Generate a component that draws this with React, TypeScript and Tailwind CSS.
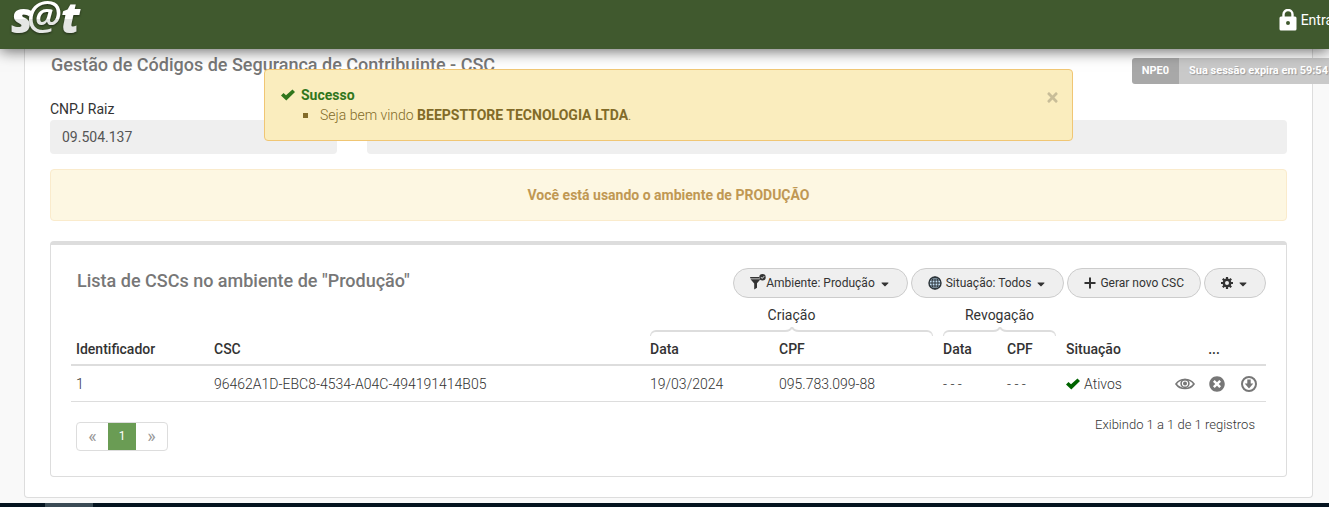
import type { ReactNode } from "react";
import { FaTimes, FaTimesCircle, FaCaretDown } from "react-icons/fa";

function Logo() {
  return (
    <svg width="76" height="42" viewBox="0 0 76 42" role="img" aria-label="s@t" className="overflow-visible drop-shadow-[0_1px_1px_rgba(0,0,0,0.5)]">
      <defs>
        <linearGradient id="logoFill" gradientUnits="userSpaceOnUse" x1="0" y1="0" x2="0" y2="38">
          <stop offset="0.500" stopColor="#ffffff" />
          <stop offset="0.500" stopColor="#e4e6e4" />
        </linearGradient>
      </defs>
      <g fill="url(#logoFill)" fontFamily="Open Sans, sans-serif" fontStyle="italic" fontWeight="800">
        <text x="1" y="33" fontSize="43">s</text>
        <text x="17" y="30" fontSize="40" fontWeight="600">@</text>
        <text x="51" y="33" fontSize="42">t</text>
      </g>
    </svg>
  );
}

function LockIcon() {
  return (
    <svg width="18" height="22" viewBox="0 0 18 22" aria-hidden="true">
      <path d="M4.500 9V5.500a4.500 4.500 0 0 1 9 0V9" fill="none" stroke="#fff" strokeWidth="2.400" />
      <path fillRule="evenodd" fill="#fff" d="M2 7.500h14a1.500 1.500 0 0 1 1.500 1.500v11a1.500 1.500 0 0 1-1.500 1.500H2A1.500 1.500 0 0 1 .5 20V9A1.500 1.500 0 0 1 2 7.500zM9 12a2 2 0 1 0 0 4 2 2 0 0 0 0-4z" />
    </svg>
  );
}

function CheckIcon({ color }: { color: string }) {
  return (
    <svg width="14" height="12" viewBox="0 0 14 12" aria-hidden="true">
      <path d="M0 6.500L2.500 4L5 6.300L11.500 0.500L14 3L5.300 11.500z" fill={color} />
    </svg>
  );
}

function FilterIcon() {
  return (
    <svg width="16" height="18" viewBox="0 0 16 18" aria-hidden="true">
      <path d="M0 3h9v1.500H0.500zM0.500 5.200h10L7 9.300v4.500L4.200 15.500v-6z" fill="#333" />
      <circle cx="12.500" cy="3.200" r="3.200" fill="#333" />
      <path d="M11 3.200l1.200 1.200L14.200 2.200" fill="none" stroke="#efefef" strokeWidth="1" />
    </svg>
  );
}

function GlobeIcon() {
  return (
    <svg width="14" height="14" viewBox="0 0 14 14" fill="none" stroke="#2b3338" strokeWidth="1" aria-hidden="true">
      <circle cx="7" cy="7" r="6" fill="#c3e0f5" strokeWidth="1.400" />
      <ellipse cx="7" cy="7" rx="3" ry="6" />
      <path d="M7 1v12M1 7h12M2 4h10M2 10h10" />
    </svg>
  );
}

function PlusIcon() {
  return (
    <svg width="12" height="12" viewBox="0 0 12 12" className="mr-1" aria-hidden="true">
      <path d="M6 0.500v11M0.500 6h11" stroke="#333" strokeWidth="2" />
    </svg>
  );
}

function GearIcon() {
  return (
    <svg width="12" height="12" viewBox="0 0 12 12" fill="none" stroke="#333" aria-hidden="true">
      <path d="M6 0v12M0 6h12M1.800 1.800l8.400 8.400M10.200 1.800l-8.400 8.400" strokeWidth="2.200" />
      <circle cx="6" cy="6" r="3.200" fill="#efefef" strokeWidth="2.400" />
    </svg>
  );
}

function EyeIcon() {
  return (
    <svg width="20" height="12" viewBox="0 0 20 12" fill="none" stroke="#777" aria-hidden="true">
      <path d="M1 6C5 0 15 0 19 6C15 12 5 12 1 6z" strokeWidth="1.600" />
      <circle cx="10" cy="5.500" r="3.900" strokeWidth="1.600" />
      <circle cx="10" cy="5.500" r="2" fill="#777" stroke="none" />
    </svg>
  );
}

function DownloadIcon() {
  return (
    <svg width="16" height="16" viewBox="0 0 16 16" aria-hidden="true">
      <circle cx="8" cy="8" r="7" fill="none" stroke="#777" strokeWidth="2" />
      <path d="M6.300 3.500h3.400V7.500H12.300l-4.300 5L3.700 7.500h2.600z" fill="#777" />
    </svg>
  );
}

function Brace() {
  return (
    <div className="mt-px flex h-2.5" aria-hidden="true">
      <div className="mt-[3px] h-[6px] flex-1 rounded-tl-lg border-t-2 border-l border-[#ddd]" />
      <svg width="14" height="6" viewBox="0 0 14 6" fill="none" stroke="#ddd" strokeWidth="2">
        <path d="M0 4C4 4 6 3 7 0C8 3 10 4 14 4" />
      </svg>
      <div className="mt-[3px] h-[6px] flex-1 rounded-tr-lg border-t-2 border-r border-[#ddd]" />
    </div>
  );
}

function PillButton({ children, label }: { children: ReactNode; label?: string }) {
  return (
    <button type="button" aria-label={label} className="flex h-[30px] items-center rounded-full border border-[#ccc] bg-[#efefef] px-4 text-xs whitespace-nowrap text-[#333]">
      {children}
    </button>
  );
}

const caret = <FaCaretDown size={12} className="mt-0.5 ml-1" aria-hidden="true" />;

export default function App() {
  return (
    <div className="flex min-h-screen flex-col overflow-x-hidden bg-[#f9f9f9] font-[Roboto,'Liberation_Sans',sans-serif] text-sm text-[#333]">
      <header className="relative z-10 flex h-[49px] items-start justify-between overflow-x-clip bg-[#40592e] pl-2.5 shadow-[0_2px_14px_rgba(0,0,0,0.6)]">
        <Logo />
        <a href="#entrar" className="-mr-1 flex items-center gap-1 pt-[9px] text-white">
          <LockIcon />
          Entra
        </a>
      </header>

      <div className="absolute top-[58px] right-0 z-[5] flex h-[26px] items-center overflow-hidden rounded-l-[3px] text-[11px] font-bold text-white">
        <span className="flex h-full items-center bg-[#a8a8a8] px-2.5">NPE0</span>
        <span className="flex h-full items-center bg-[#c9c9c9] pr-px pl-2.5 [text-shadow:1px_1px_1px_#999]">Sua sessão expira em 59:54</span>
      </div>

      <div role="alert" className="absolute top-[69px] right-64 left-[264px] z-20 flex h-[72px] justify-between rounded border border-[#f0c674] bg-[#faedbe] px-4 pt-[15px] text-[#826b28]">
        <div>
          <h2 className="flex items-center gap-1.5 font-bold text-[#30761c]">
            <CheckIcon color="#30761c" />
            Sucesso
          </h2>
          <ul className="pl-[22px] font-light">
            <li className="flex items-center gap-3 before:size-[5px] before:bg-[#826b28]">
              <span>Seja bem vindo <strong className="font-bold">BEEPSTTORE TECNOLOGIA LTDA</strong>.</span>
            </li>
          </ul>
        </div>
        <button type="button" aria-label="Fechar" className="-mr-1 flex h-6 items-center text-[#c8bd98]">
          <FaTimes size={15} />
        </button>
      </div>

      <main className="mx-4 mb-[5px] ml-6 flex-1 rounded-b-sm border border-t-0 border-[#ddd] bg-white px-[25px] pt-1 pb-5">
        <h1 className="pl-px text-lg leading-6 font-medium text-[#777]">Gestão de Códigos de Segurança de Contribuinte - CSC</h1>
        <form className="mt-[22px] grid grid-cols-[287px_1fr] items-end gap-x-[30px]">
          <div>
            <label htmlFor="cnpj" className="block leading-[21px]">CNPJ Raiz</label>
            <input id="cnpj" readOnly value="09.504.137" className="block h-[34px] w-full rounded bg-[#efefef] px-3 text-[#555]" />
          </div>
          <input aria-label="Nome" readOnly value="" className="block h-[34px] w-full rounded bg-[#efefef] px-3" />
        </form>
        <p className="mt-[15px] rounded border border-[#faebcc] bg-[#fdf7e2] py-[15px] text-center leading-5 font-bold text-[#c09853]">
          Você está usando o ambiente de PRODUÇÃO
        </p>

        <section className="mt-5 rounded-sm border border-t-4 border-[#ddd] px-5 pt-[23px] pb-[25px]">
          <div className="flex items-start justify-between">
            <h2 className="pl-1.5 text-lg leading-[26px] font-medium text-[#777]">Lista de CSCs no ambiente de "Produção"</h2>
            <div className="flex gap-[3px]">
              <PillButton><FilterIcon />Ambiente: Produção{caret}</PillButton>
              <PillButton><GlobeIcon /><span className="ml-1">Situação: Todos</span>{caret}</PillButton>
              <PillButton><PlusIcon />Gerar novo CSC</PillButton>
              <PillButton label="Opções"><GearIcon />{caret}</PillButton>
            </div>
          </div>

          <table className="mt-1.5 w-full table-fixed text-left">
            <colgroup>
              <col className="w-[138px]" />
              <col />
              <col className="w-[129px]" />
              <col className="w-[164px]" />
              <col className="w-16" />
              <col className="w-[59px]" />
              <col className="w-[101px]" />
              <col className="w-[104px]" />
            </colgroup>
            <thead>
              <tr>
                <td colSpan={2} />
                <th colSpan={2} scope="colgroup" className="px-[5px] text-center leading-[22px] font-normal">Criação<Brace /></th>
                <th colSpan={2} scope="colgroup" className="px-[5px] text-center leading-[22px] font-normal">Revogação<Brace /></th>
                <td colSpan={2} />
              </tr>
              <tr className="h-7 border-b-2 border-[#ddd] [&>th]:px-[5px] [&>th]:pb-1 [&>th]:font-medium">
                <th>Identificador</th>
                <th>CSC</th>
                <th>Data</th>
                <th>CPF</th>
                <th>Data</th>
                <th>CPF</th>
                <th>Situação</th>
                <th className="text-center">...</th>
              </tr>
            </thead>
            <tbody>
              <tr className="h-9 border-b border-[#ddd] font-light whitespace-nowrap [&>td]:px-[5px] [&>td]:pt-0.5">
                <td>1</td>
                <td>96462A1D-EBC8-4534-A04C-494191414B05</td>
                <td>19/03/2024</td>
                <td>095.783.099-88</td>
                <td>- - -</td>
                <td>- - -</td>
                <td>
                  <span className="flex items-center gap-1"><CheckIcon color="#006400" />Ativos</span>
                </td>
                <td>
                  <div className="flex items-center justify-end gap-4 pr-1 text-[#777]">
                    <button type="button" aria-label="Visualizar" className="-mr-0.5"><EyeIcon /></button>
                    <button type="button" aria-label="Revogar"><FaTimesCircle size={16} /></button>
                    <button type="button" aria-label="Baixar"><DownloadIcon /></button>
                  </div>
                </td>
              </tr>
            </tbody>
          </table>

          <div className="flex items-start justify-between pt-5 pr-[11px] pl-[5px]">
            <nav aria-label="Paginação" className="flex h-[29px] overflow-hidden rounded border border-[#ddd] text-[#999]">
              <button type="button" className="w-[31px] text-lg leading-6">«</button>
              <button type="button" aria-current="page" className="w-7 bg-[#6a9c54] text-xs text-white">1</button>
              <button type="button" className="w-[31px] text-lg leading-6">»</button>
            </nav>
            <p className="-mt-[7px] text-[13px] leading-5 font-light">Exibindo 1 a 1 de 1 registros</p>
          </div>
        </section>
      </main>
      <div className="flex h-1 bg-[#04131f] pl-[45px]"><div className="w-12 bg-[#3a4a54]" /></div>
    </div>
  );
}
